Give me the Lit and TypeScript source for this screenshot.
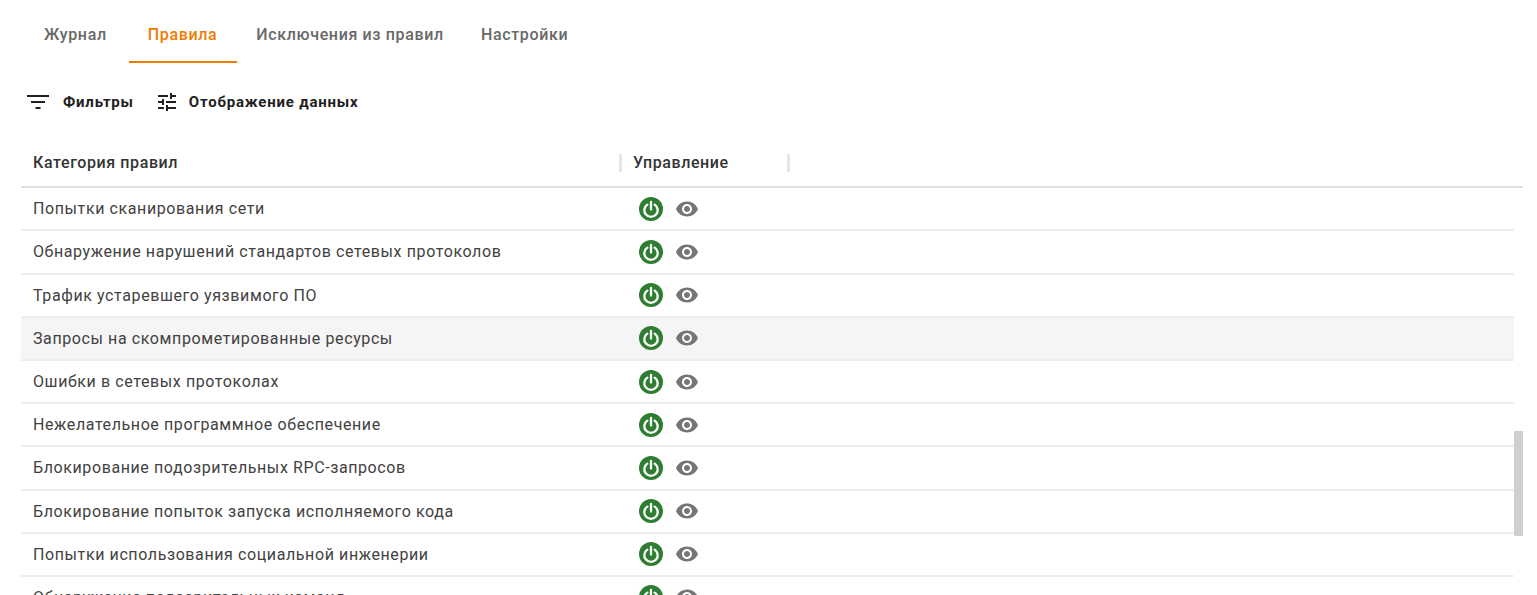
import { LitElement, html, css } from "lit";
import { customElement } from "lit/decorators.js";

const rows = [
  "Попытки сканирования сети",
  "Обнаружение нарушений стандартов сетевых протоколов",
  "Трафик устаревшего уязвимого ПО",
  "Запросы на скомпрометированные ресурсы",
  "Ошибки в сетевых протоколах",
  "Нежелательное программное обеспечение",
  "Блокирование подозрительных RPC-запросов",
  "Блокирование попыток запуска исполняемого кода",
  "Попытки использования социальной инженерии",
  "Обнаружение подозрительных команд",
];

const power = html`<svg class="power" viewBox="0 0 24 24" width="24" height="24">
  <circle cx="12" cy="12" r="12" fill="#2e7d32"></circle>
  <path d="M12 5v7.500" stroke="#fff" stroke-width="2.300" stroke-linecap="round" fill="none"></path>
  <path d="M8.300 7.600a6.700 6.700 0 1 0 7.400 0" stroke="#fff" stroke-width="2.300" stroke-linecap="round" fill="none"></path>
</svg>`;

const eye = html`<svg class="eye" viewBox="0 0 24 24" width="24" height="24">
  <path fill="#757575" d="M12 4.500C7 4.500 2.730 7.610 1 12c1.730 4.390 6 7.500 11 7.500s9.270-3.110 11-7.500c-1.730-4.390-6-7.500-11-7.500zM12 17c-2.760 0-5-2.240-5-5s2.240-5 5-5 5 2.240 5 5-2.240 5-5 5zm0-8c-1.660 0-3 1.340-3 3s1.340 3 3 3 3-1.340 3-3-1.340-3-3-3z"></path>
</svg>`;

@customElement("app-root")
export class AppRoot extends LitElement {
  static styles = css`
    :host {
      display: block;
      position: relative;
      height: 595px;
      overflow: hidden;
      background: #fff;
      font-family: Roboto, "Noto Sans", sans-serif;
      color: #212121;
    }
    .tabs {
      display: flex;
      padding: 8px 0 0 25px;
      height: 55px;
    }
    .tab {
      display: flex;
      align-items: center;
      padding: 0 19px;
      font-size: 16px;
      font-weight: 500;
      color: #686868;
      letter-spacing: 0.65px;
      border-bottom: 2px solid transparent;
    }
    .tab:nth-child(1) { padding-right: 22px; }
    .tab:nth-child(2) { padding-right: 20px; }
    .tab:nth-child(3) { padding-right: 18px; }
    .tab.active {
      color: #ef7c00;
      border-bottom-color: #ef7c00;
    }
    .toolbar {
      display: flex;
      align-items: center;
      height: 38px;
      margin-top: 20px;
      padding-left: 26px;
    }
    .tool {
      display: flex;
      align-items: center;
      font-size: 15px;
      font-weight: 700;
      letter-spacing: 0.8px;
      color: #212121;
      margin-right: 21px;
    }
    .tool svg { display: block; margin-right: 13px; }
    .tool.second svg { margin-right: 10px; }
    .table {
      margin: 18.2px 14px 0 21px;
    }
    .head {
      display: flex;
      align-items: center;
      height: 47px;
      border-bottom: 2px solid #e0e0e0;
      font-size: 16px;
      font-weight: 500;
      color: #333333;
      letter-spacing: 0.6px;
    }
    .c1 { width: 598px; padding-left: 12px; box-sizing: border-box; flex: none; }
    .c2 {
      width: 171px;
      height: 18px;
      line-height: 18px;
      padding-left: 11px;
      box-sizing: border-box;
      flex: none;
      border-left: 3px solid #e6e6e6;
      border-right: 3px solid #e6e6e6;
    }
    .row {
      display: flex;
      align-items: center;
      height: 43.2px;
      box-sizing: border-box;
      margin-right: 9px;
      border-bottom: 2px solid #eeeeee;
      font-size: 16px;
      color: #424242;
      letter-spacing: 0.6px;
    }
    .row.hover { background: #f5f5f5; }
    .actions { display: flex; align-items: center; padding-left: 20px; gap: 12px; }
    .actions svg { display: block; flex: none; }
    .thumb {
      position: absolute;
      left: 1514px;
      top: 431px;
      width: 9px;
      height: 105px;
      background: #cfcfcf;
    }
  `;

  render() {
    return html`
      <div class="tabs">
        <div class="tab">Журнал</div>
        <div class="tab active">Правила</div>
        <div class="tab">Исключения из правил</div>
        <div class="tab">Настройки</div>
      </div>
      <div class="toolbar">
        <div class="tool">
          <svg width="24" height="24" viewBox="0 0 24 24"><path fill="#212121" d="M1 5h22v2H1zM5 11h14v2H5zM9.500 17h5v2h-5z"></path></svg>
          Фильтры
        </div>
        <div class="tool second">
          <svg width="24" height="24" viewBox="0 0 24 24"><path fill="#212121" d="M3 17v2h6v-2H3zM3 5v2h10V5H3zm10 16v-2h8v-2h-8v-2h-2v6h2zM7 9v2H3v2h4v2h2V9H7zm14 4v-2H11v2h10zm-6-4h2V7h4V5h-4V3h-2v6z"></path></svg>
          Отображение данных
        </div>
      </div>
      <div class="table">
        <div class="head">
          <div class="c1">Категория правил</div>
          <div class="c2">Управление</div>
        </div>
        ${rows.map(
          (r, i) => html`<div class="row ${i === 3 ? "hover" : ""}">
            <div class="c1">${r}</div>
            <div class="actions">${power}${eye}</div>
          </div>`
        )}
      </div>
      <div class="thumb"></div>
    `;
  }
}
